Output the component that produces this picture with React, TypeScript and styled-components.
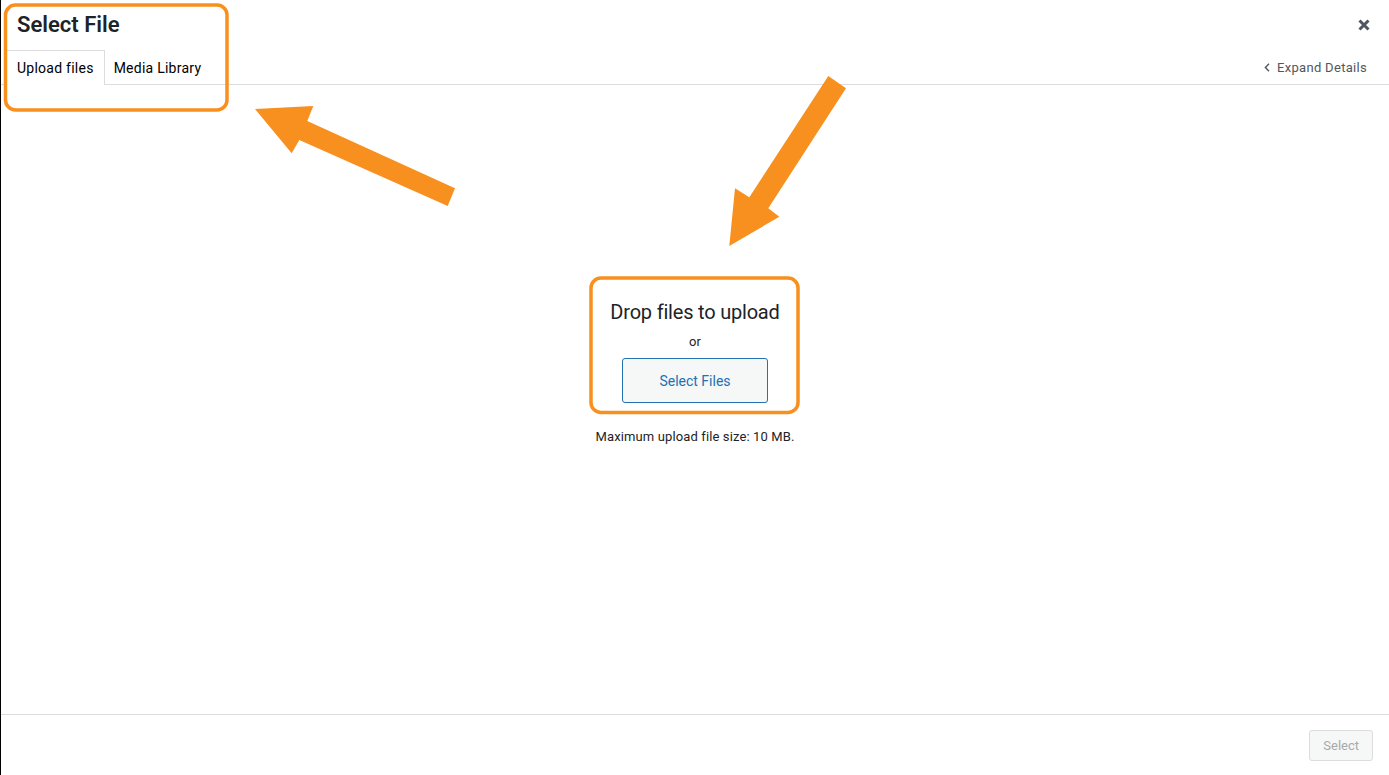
import styled, { createGlobalStyle } from "styled-components";

const GlobalStyle = createGlobalStyle`
  html, body {
    margin: 0;
    padding: 0;
    background: #fff;
  }
  body {
    font-family: Roboto, "Liberation Sans", Arial, sans-serif;
    color: #1d2327;
  }
  * {
    box-sizing: border-box;
  }
`;

const App = () => {
    return (
        <>
            <GlobalStyle />
            <Frame>
                <TitleBar>
                    <Title>Select File</Title>
                    <CloseButton aria-label="Close dialog">
                        <svg width="12" height="12" viewBox="0 0 12 12">
                            <path d="M1.5 1.5 L10.5 10.5 M10.5 1.5 L1.5 10.5" stroke="#50575e" strokeWidth="3" />
                        </svg>
                    </CloseButton>
                </TitleBar>

                <Router>
                    <Tab active>Upload files</Tab>
                    <Tab>Media Library</Tab>
                    <ExpandLink>
                        <svg width="6" height="9" viewBox="0 0 6 9">
                            <path d="M5 0.8 L1.4 4.5 L5 8.2" fill="none" stroke="#50575e" strokeWidth="1.4" />
                        </svg>
                        Expand Details
                    </ExpandLink>
                </Router>

                <Content>
                    <UploadUi>
                        <DropTitle>Drop files to upload</DropTitle>
                        <OrText>or</OrText>
                        <HeroButton>Select Files</HeroButton>
                    </UploadUi>
                    <MaxSize>Maximum upload file size: 10 MB.</MaxSize>
                </Content>

                <Toolbar>
                    <SelectButton disabled>Select</SelectButton>
                </Toolbar>

                <Annotations width="1389" height="775" viewBox="0 0 1389 775">
                    <rect x="5.5" y="5" width="221.5" height="105" rx="10" fill="none" stroke="#f8901f" strokeWidth="3.5" />
                    <rect x="591" y="278" width="207" height="134.5" rx="10" fill="none" stroke="#f8901f" strokeWidth="3.5" />
                    <polygon
                        points="255,109 313.3,106 307.3,121 455,188.3 447.7,206 299.3,140 291.7,153.3"
                        fill="#f8901f"
                    />
                    <polygon
                        points="828.3,76 846,88.3 768.3,208.3 779.3,216.7 729.3,246 735,188.3 749.3,197.3"
                        fill="#f8901f"
                    />
                </Annotations>
            </Frame>
        </>
    );
}

const Frame = styled.div`
  position: relative;
  height: 100vh;
  display: flex;
  flex-direction: column;
  border-left: 1px solid #000;
  background: #fff;
`;

const TitleBar = styled.div`
  display: flex;
  align-items: center;
  justify-content: space-between;
  height: 50px;
`;

const Title = styled.h1`
  margin: 0;
  padding: 0 16px;
  font-size: 22px;
  font-weight: 600;
  line-height: 50px;
  color: #1d2327;
`;

const CloseButton = styled.button`
  width: 50px;
  height: 50px;
  padding: 0;
  border: 0;
  background: transparent;
  display: flex;
  align-items: center;
  justify-content: center;
  cursor: pointer;
`;

const Router = styled.div`
  display: flex;
  align-items: flex-end;
  height: 35px;
  padding-left: 5px;
  border-bottom: 1px solid #dcdcde;
`;

const Tab = styled.div<{ active?: boolean }>`
  padding: 8px 10px 8px ${({ active }) => (active ? "10px" : "8px")};
  font-size: 14px;
  line-height: 18px;
  letter-spacing: 0.25px;
  color: #000;
  margin-bottom: -1px;
  background: ${({ active }) => (active ? "#fff" : "transparent")};
  border: 1px solid ${({ active }) => (active ? "#dcdcde" : "transparent")};
  border-bottom: none;
  cursor: pointer;
`;

const ExpandLink = styled.div`
  margin-left: auto;
  align-self: center;
  display: flex;
  align-items: center;
  gap: 7px;
  padding-right: 22px;
  font-size: 13px;
  letter-spacing: 0.3px;
  color: #50575e;
`;

const Content = styled.div`
  flex: 1;
  display: flex;
  flex-direction: column;
  align-items: center;
  padding-top: 213px;
`;

const UploadUi = styled.div`
  display: flex;
  flex-direction: column;
  align-items: center;
`;

const DropTitle = styled.h2`
  margin: 0;
  font-size: 20px;
  font-weight: 400;
  line-height: 28px;
  letter-spacing: -0.2px;
  color: #1d2327;
`;

const OrText = styled.p`
  margin: 7px 0 7px;
  font-size: 13px;
  line-height: 18px;
  color: #1d2327;
`;

const HeroButton = styled.button`
  height: 45px;
  padding: 0 36px;
  font-family: inherit;
  font-size: 14px;
  color: #2271b1;
  background: #f6f7f7;
  border: 1px solid #2271b1;
  border-radius: 3px;
  cursor: pointer;
`;

const MaxSize = styled.p`
  margin: 25px 0 0;
  font-size: 13px;
  line-height: 18px;
  letter-spacing: 0.12px;
  color: #1d2327;
`;

const Toolbar = styled.div`
  height: 61px;
  display: flex;
  align-items: center;
  justify-content: flex-end;
  padding-right: 16px;
  border-top: 1px solid #dcdcde;
`;

const SelectButton = styled.button`
  height: 31px;
  padding: 0 13px;
  font-family: inherit;
  font-size: 13px;
  color: #a7aaad;
  background: #f6f7f7;
  border: 1px solid #dcdcde;
  border-radius: 3px;
`;

const Annotations = styled.svg`
  position: absolute;
  top: 0;
  left: -1px;
  pointer-events: none;
`;

export default App;
